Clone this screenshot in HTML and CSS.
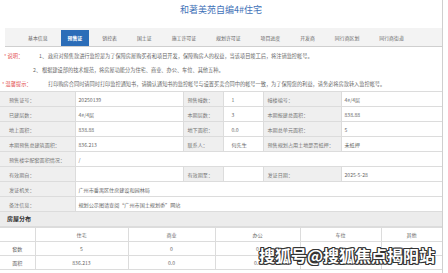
FILE: index.html
```html
<!DOCTYPE html>
<html lang="en">
<head>
    <meta charset="UTF-8">
    <meta name="viewport" content="width=device-width, initial-scale=1.0">
    <link rel="stylesheet" href="styles.css">
    <title>和著美苑自编4#住宅</title>
</head>
<body>
    <div id="PresaleContainer">
        <h2 class="title">和著美苑自编4#住宅</h2>

        <ul class="tabs">
            <li>基本信息</li>
            <li class="active">预售证</li>
            <li>销控表</li>
            <li>国土证</li>
            <li>施工许可证</li>
            <li>规划许可证</li>
            <li>项目进度</li>
            <li>开发商</li>
            <li>同行商区划</li>
            <li>同行商街道</li>
        </ul>

        <div class="notice">
            <div class="notice-row">
                <span class="tip tip-first">* 说明：</span><span class="num">1、</span>政府对预售款进行监控是为了保障房屋购买者和项目开发，保障购房人的权益，当该项目竣工后，将注销监控帐号。
            </div>
            <div class="notice-row indent">
                <span class="num">2、</span>根据建设部的技术规范，将房屋功能分为住宅、商业、办公、车位、其他五种。
            </div>
            <div class="notice-row">
                <span class="tip tip-warm">* 温馨提示：</span>打印购房合同时请同时打印监控通知书，请确认通知书的监控帐号与设置买卖合同中的帐号一致，为了保障您的利益，请务必将房款转入监控帐号。
            </div>
        </div>

        <table class="info">
            <colgroup>
                <col style="width: 75px">
                <col style="width: 108px">
                <col style="width: 40px">
                <col style="width: 40px">
                <col style="width: 78px">
                <col style="width: 101px">
            </colgroup>
            <tr>
                <th class="first">预售证号：</th><td>20250139</td>
                <th>预售幢数：</th><td class="wide">1</td>
                <th>幢楼编号：</th><td>4#/4层</td>
            </tr>
            <tr>
                <th class="first">已建层数：</th><td>4#/4层</td>
                <th>本期层数：</th><td class="wide">3</td>
                <th>本期报建总面积：</th><td>838.88</td>
            </tr>
            <tr>
                <th class="first">地上面积：</th><td>838.88</td>
                <th>地下面积：</th><td class="wide">0.0</td>
                <th>本期总单元面积：</th><td>5</td>
            </tr>
            <tr>
                <th class="first">本期预售总建筑面积：</th><td>836.213</td>
                <th>联系人：</th><td class="wide">何先生</td>
                <th>预售规划占用土地是否抵押：</th><td>未抵押</td>
            </tr>
            <tr>
                <th class="first">预售楼宇配套面积情况：</th><td colspan="5">/</td>
            </tr>
            <tr>
                <th class="first">有效期自：</th><td></td>
                <th>有效期至：</th><td></td>
                <th>发证日期：</th><td>2025-5-28</td>
            </tr>
            <tr>
                <th class="first">发证机关：</th><td colspan="5">广州市番禺区住房建设和园林局</td>
            </tr>
            <tr>
                <th class="first">备注信息：</th><td colspan="5">规划公示图请查阅“广州市国土规划委”网站</td>
            </tr>
        </table>

        <div class="section-title">房屋分布</div>

        <table class="dist">
            <colgroup>
                <col style="width: 35px">
                <col style="width: 93px">
                <col style="width: 87px">
                <col style="width: 85px">
                <col style="width: 81px">
                <col style="width: 61px">
            </colgroup>
            <tr><td></td><td>住宅</td><td>商业</td><td>办公</td><td>车位</td><td>其他</td></tr>
            <tr><td>套数</td><td>5</td><td>0</td><td>0</td><td>0</td><td>0</td></tr>
            <tr><td>面积</td><td>836.213</td><td>0.0</td><td>0.0</td><td>0.0</td><td>0.0</td></tr>
        </table>

        <div class="watermark">搜狐号@搜狐焦点揭阳站</div>
    </div>
</body>
</html>
```

FILE: styles.css
```css
body {
    font-family: "Noto Sans CJK SC", "Liberation Sans", sans-serif;
    background-color: #fff;
    margin: 0;
    padding: 0;
    color: #666;
}

#PresaleContainer {
    position: relative;
    width: 442px;
    height: 273px;
    border-right: 1px solid #cfcfcf;
    overflow: hidden;
}

.title {
    margin: 0;
    height: 28px;
    padding-top: 4px;
    box-sizing: border-box;
    text-align: center;
    font-size: 9px;
    line-height: 12px;
    font-weight: normal;
    color: #3f72b8;
}

.tabs {
    list-style: none;
    margin: 0 0 0 5px;
    padding: 3px 0 0 16px;
    height: 19px;
    box-sizing: border-box;
    display: flex;
    align-items: flex-end;
    gap: 6px;
    background-color: #f3f3f3;
    border-bottom: 1px solid #cfcfcf;
}

.tabs li {
    padding: 0 7px;
    height: 16px;
    line-height: 16px;
    font-size: 4.9px;
    color: #666;
}

.tabs li.active {
    background-color: #2c6db8;
    color: #fff;
    font-weight: bold;
}

.notice {
    height: 44px;
    padding-top: 2px;
    box-sizing: border-box;
    font-size: 5.2px;
    color: #666;
}

.notice-row {
    height: 14px;
    line-height: 14px;
    white-space: nowrap;
}

.notice-row.indent {
    padding-left: 33px;
}

.tip {
    display: inline-block;
    color: #e24a4a;
}

.tip-first {
    width: 35px;
    padding-left: 4px;
}

.tip-warm {
    width: 46px;
    padding-left: 2px;
}

.num {
    display: inline-block;
    width: 9px;
}

table {
    border-collapse: collapse;
    table-layout: fixed;
    width: 442px;
    font-size: 5.1px;
}

.info th,
.info td {
    height: 14px;
    padding: 0 0 0 4px;
    border: 1px solid #dcdcdc;
    text-align: left;
    font-weight: normal;
    white-space: nowrap;
    overflow: hidden;
    color: #666;
}

.info th {
    background-color: #efefef;
    color: #777;
}

.info th.first {
    padding-left: 9px;
    border-left: none;
}

.info td {
    padding-left: 3px;
}

.info td.wide {
    padding-left: 8px;
}

.section-title {
    height: 14px;
    line-height: 14px;
    padding-left: 7px;
    background-color: #ececec;
    border-bottom: 1px solid #dcdcdc;
    font-size: 6px;
    font-weight: bold;
    color: #333;
}

.dist td {
    height: 13px;
    padding: 0;
    border: 1px solid #dcdcdc;
    text-align: center;
    color: #666;
}

.dist td:first-child {
    border-left: none;
}

.watermark {
    position: absolute;
    right: 7px;
    bottom: 6px;
    font-size: 16px;
    font-weight: bold;
    color: #fff;
    text-shadow: 1px 1px 0 #333, -1px -1px 0 #333, 1px -1px 0 #333, -1px 1px 0 #333, 1px 0 0 #333, -1px 0 0 #333, 0 1px 0 #333, 0 -1px 0 #333;
}
```
